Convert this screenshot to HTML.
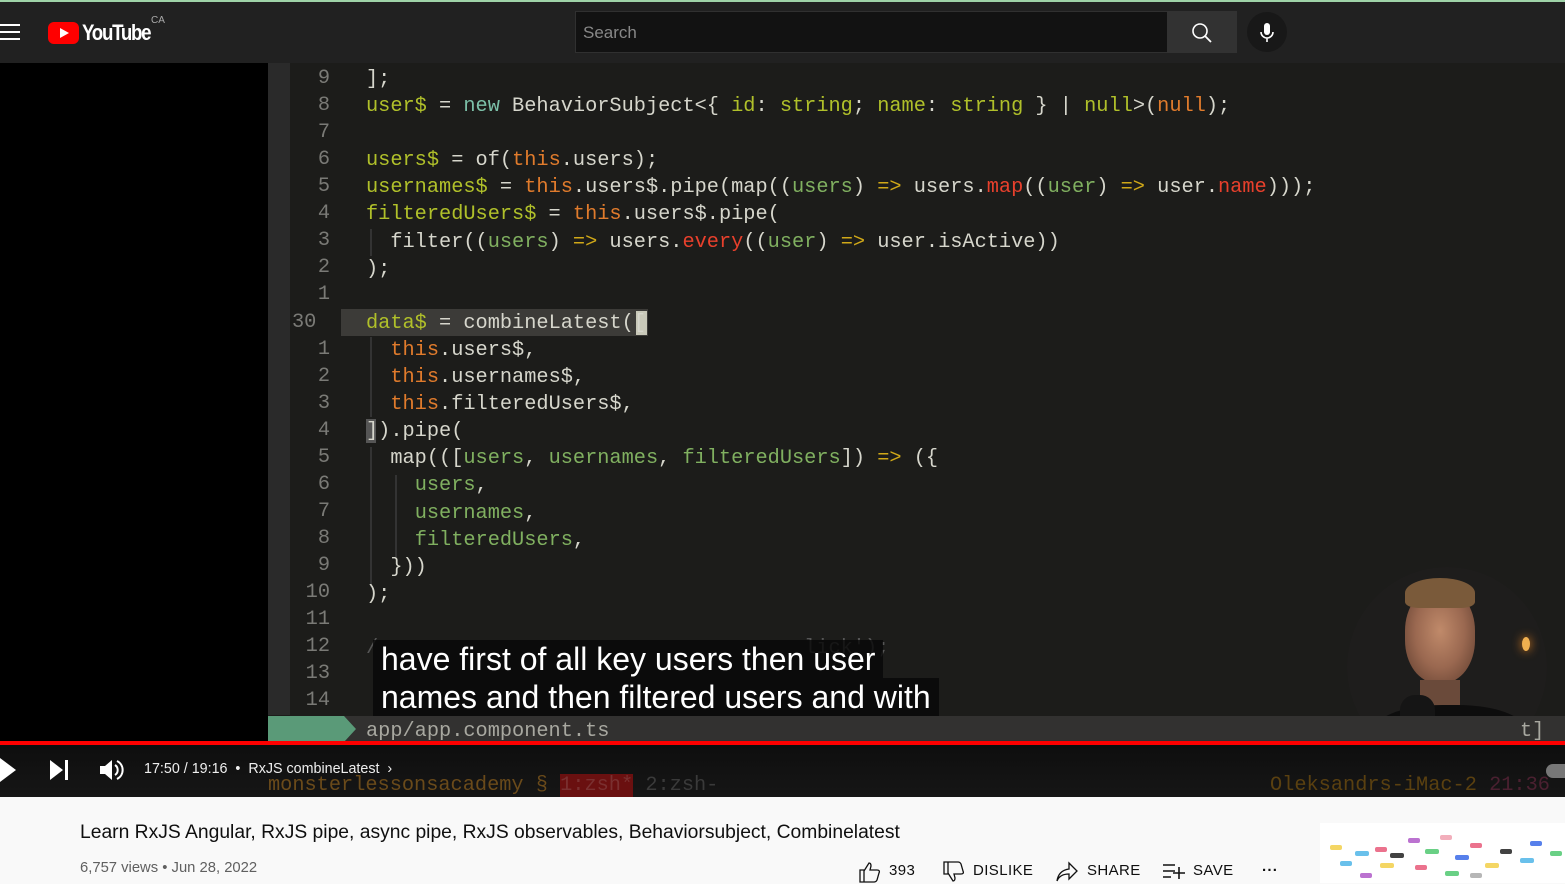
<!DOCTYPE html>
<html><head><meta charset="utf-8"><style>
*{margin:0;padding:0;box-sizing:border-box}
body{width:1565px;height:883px;overflow:hidden;background:#f9f9f9;font-family:"Liberation Sans",sans-serif;position:relative}
.hdr{position:absolute;left:0;top:0;width:1565px;height:63px;background:#212121;border-top:2px solid #9fd3a8}
.vid{position:absolute;left:0;top:63px;width:1565px;height:734px;background:#000}
.code{position:absolute;left:268px;top:63px;width:1297px;height:734px;background:#1c1c1a}
.gut{position:absolute;left:268px;top:63px;width:22px;height:652px;background:#2a2a2a}
.ln{position:absolute;left:290px;width:40px;text-align:right;color:#7a7a76;font:20.3px "Liberation Mono",monospace}
.cl{position:absolute;left:366px;white-space:pre;color:#d6d6cc;font:20.3px "Liberation Mono",monospace;line-height:27.1px}
.v{color:#b0c02a}.t{color:#e07b2c}.r{color:#e8402c}.p{color:#80b060}.a{color:#d0a818}.k{color:#7cc0a8}
.sub{position:absolute;left:373px;color:#fff;font-size:32px;background:rgba(8,8,8,.8);padding:0 8px;line-height:38px;height:38px}
.btn{position:absolute;top:862px;color:#0f0f0f;font-size:15px;letter-spacing:.4px}
</style></head><body>
<div class="hdr">
 <div style="position:absolute;left:0;top:22px;width:20px;height:2px;background:#fff;box-shadow:0 7px 0 #fff,0 14px 0 #fff"></div>
 <div style="position:absolute;left:48px;top:20px;width:31px;height:22px;background:#f00;border-radius:6px"></div>
 <div style="position:absolute;left:60px;top:26px;width:0;height:0;border-left:9px solid #fff;border-top:5px solid transparent;border-bottom:5px solid transparent"></div>
 <div style="position:absolute;left:82px;top:18px;color:#fff;font-size:22px;font-weight:bold;letter-spacing:-1.5px;transform:scaleX(.85);transform-origin:left">YouTube</div>
 <div style="position:absolute;left:151px;top:13px;color:#aaa;font-size:10px">CA</div>
 <div style="position:absolute;left:575px;top:9px;width:593px;height:42px;background:#121212;border:1px solid #303030"></div>
 <div style="position:absolute;left:583px;top:21px;color:#888;font-size:17px">Search</div>
 <div style="position:absolute;left:1167px;top:9px;width:70px;height:42px;background:#323232"></div>
 <svg style="position:absolute;left:1191px;top:20px" width="22" height="22" viewBox="0 0 22 22"><circle cx="9" cy="9" r="7" fill="none" stroke="#fff" stroke-width="1.6"/><path d="M14 14l6 6" stroke="#fff" stroke-width="1.8"/></svg>
 <div style="position:absolute;left:1247px;top:10px;width:40px;height:40px;border-radius:50%;background:#181818"></div>
 <svg style="position:absolute;left:1258px;top:20px" width="18" height="22" viewBox="0 0 18 22"><rect x="6" y="1" width="6" height="12" rx="3" fill="#fff"/><path d="M3 10a6 6 0 0 0 12 0M9 16v4" stroke="#fff" stroke-width="1.6" fill="none"/></svg>
</div>
<div class="vid"></div>
<div class="code"></div>
<div class="gut"></div>
<div style="position:absolute;left:341px;top:309px;width:307px;height:27px;background:#3c3b38"></div>
<div style="position:absolute;left:636px;top:311px;width:11px;height:24px;background:#c8c8b8"></div>
<div style="position:absolute;left:366px;top:419px;width:10px;height:24px;background:#555"></div>
<div style="position:absolute;left:370px;top:337px;width:2px;height:80px;background:#333"></div>
<div style="position:absolute;left:370px;top:229px;width:2px;height:27px;background:#333"></div>
<div style="position:absolute;left:370px;top:447px;width:2px;height:140px;background:#333"></div>
<div style="position:absolute;left:395px;top:475px;width:2px;height:82px;background:#333"></div>

<div class="ln" style="top:67px">9</div><div class="ln" style="top:94px">8</div><div class="ln" style="top:121px">7</div><div class="ln" style="top:148px">6</div><div class="ln" style="top:175px">5</div><div class="ln" style="top:202px">4</div><div class="ln" style="top:229px">3</div><div class="ln" style="top:256px">2</div><div class="ln" style="top:283px">1</div>
<div class="ln" style="top:311px;left:292px;text-align:left">30</div>
<div class="ln" style="top:338px">1</div><div class="ln" style="top:365px">2</div><div class="ln" style="top:392px">3</div><div class="ln" style="top:419px">4</div><div class="ln" style="top:446px">5</div><div class="ln" style="top:473px">6</div><div class="ln" style="top:500px">7</div><div class="ln" style="top:527px">8</div><div class="ln" style="top:554px">9</div><div class="ln" style="top:581px">10</div><div class="ln" style="top:608px">11</div><div class="ln" style="top:635px">12</div><div class="ln" style="top:662px">13</div><div class="ln" style="top:689px">14</div>

<div class="cl" style="top:66px">];
<span class="v">user$</span> = <span class="k">new</span> BehaviorSubject&lt;{ <span class="v">id</span>: <span class="v">string</span>; <span class="v">name</span>: <span class="v">string</span> } | <span class="v">null</span>&gt;(<span class="t">null</span>);

<span class="v">users$</span> = of(<span class="t">this</span>.users);
<span class="v">usernames$</span> = <span class="t">this</span>.users$.pipe(map((<span class="p">users</span>) <span class="a">=&gt;</span> users.<span class="r">map</span>((<span class="p">user</span>) <span class="a">=&gt;</span> user.<span class="r">name</span>)));
<span class="v">filteredUsers$</span> = <span class="t">this</span>.users$.pipe(
  filter((<span class="p">users</span>) <span class="a">=&gt;</span> users.<span class="r">every</span>((<span class="p">user</span>) <span class="a">=&gt;</span> user.isActive))
);

<span class="v">data$</span> = combineLatest([
  <span class="t">this</span>.users$,
  <span class="t">this</span>.usernames$,
  <span class="t">this</span>.filteredUsers$,
]).pipe(
  map(([<span class="p">users</span>, <span class="p">usernames</span>, <span class="p">filteredUsers</span>]) <span class="a">=&gt;</span> ({
    <span class="p">users</span>,
    <span class="p">usernames</span>,
    <span class="p">filteredUsers</span>,
  }))
);

<span style="color:#555">/                                   lick');</span></div>

<div style="position:absolute;left:1347px;top:567px;width:200px;height:200px;border-radius:50%;background:#1e1d1c"></div>
<div style="position:absolute;left:1405px;top:588px;width:70px;height:95px;border-radius:45%;background:radial-gradient(ellipse at 50% 45%,#c08a6a 0,#9a6850 50%,#5a3a2c 100%)"></div>
<div style="position:absolute;left:1405px;top:578px;width:70px;height:30px;border-radius:50% 50% 20% 20%;background:#7a5a3a"></div>
<div style="position:absolute;left:1420px;top:680px;width:40px;height:40px;background:#6a4a3a"></div>
<div style="position:absolute;left:1375px;top:705px;width:150px;height:55px;border-radius:45% 45% 30% 30%;background:#0d0d0d"></div>
<div style="position:absolute;left:1400px;top:695px;width:35px;height:60px;border-radius:15px;background:#151515"></div>
<div style="position:absolute;left:1522px;top:637px;width:8px;height:14px;border-radius:50%;background:#f0b050;box-shadow:0 0 10px #e08020"></div>

<div class="sub" style="top:640px">have first of all key users then user</div>
<div class="sub" style="top:678px">names and then filtered users and with</div>

<div style="position:absolute;left:268px;top:716px;width:1297px;height:27px;background:#323130"></div>
<div style="position:absolute;left:268px;top:716px;width:76px;height:27px;background:#5a9a78"></div>
<div style="position:absolute;left:344px;top:716px;width:0;height:0;border-left:12px solid #5a9a78;border-top:13.5px solid transparent;border-bottom:13.5px solid transparent"></div>
<div class="cl" style="top:718px;color:#a8a8a0">app/app.component.ts</div>
<div class="cl" style="top:718px;left:1520px;color:#a8a8a0">t]</div>

<div style="position:absolute;left:0;top:745px;width:1565px;height:52px;background:linear-gradient(#0e0e0e,#161616)"></div>
<div style="position:absolute;left:0;top:741px;width:1565px;height:4px;background:#f00"></div>
<div class="cl" style="top:772px;left:268px;color:#6a4a1a">monsterlessonsacademy § <span style="background:#6a1010;color:#7a3030">1:zsh*</span> <span style="color:#3a3a3a">2:zsh-</span></div>
<div class="cl" style="top:772px;left:1270px;color:#5a4010">Oleksandrs-iMac-2 <span style="color:#4a2030">21:36</span></div>
<svg style="position:absolute;left:0;top:758px" width="20" height="24"><path d="M0 0l16 12L0 24z" fill="#fff"/></svg>
<svg style="position:absolute;left:49px;top:759px" width="22" height="22"><path d="M1 1l13 10L1 21z" fill="#fff"/><rect x="16" y="1" width="3" height="20" fill="#fff"/></svg>
<svg style="position:absolute;left:99px;top:758px" width="26" height="24"><path d="M1 8h5l7-6v20l-7-6H1z" fill="#fff"/><path d="M16 7a6 6 0 0 1 0 10M18 3a10 10 0 0 1 0 18" stroke="#fff" stroke-width="2" fill="none"/></svg>
<div style="position:absolute;left:144px;top:761px;color:#eee;font-size:14.3px">17:50 / 19:16 &nbsp;• &nbsp;RxJS combineLatest &nbsp;›</div>
<div style="position:absolute;left:1546px;top:764px;width:30px;height:14px;border-radius:7px;background:#777"></div>

<div style="position:absolute;left:80px;top:822px;color:#0f0f0f;font-size:19.3px">Learn RxJS Angular, RxJS pipe, async pipe, RxJS observables, Behaviorsubject, Combinelatest</div>
<div style="position:absolute;left:80px;top:860px;color:#606060;font-size:14.8px">6,757 views • Jun 28, 2022</div>

<svg style="position:absolute;left:858px;top:860px" width="24" height="24"><path d="M2 10h4v12H2zM6 11l5-8c2 0 2 2 2 3l-1 4h7c2 0 3 1 2 3l-2 7c-1 2-2 2-3 2H6" fill="none" stroke="#111" stroke-width="1.3"/></svg>
<div class="btn" style="left:889px">393</div>
<svg style="position:absolute;left:942px;top:860px" width="24" height="24"><path d="M2 2h4v12H2zM6 13l5 8c2 0 2-2 2-3l-1-4h7c2 0 3-1 2-3l-2-7c-1-2-2-2-3-2H6" fill="none" stroke="#111" stroke-width="1.3"/></svg>
<div class="btn" style="left:973px">DISLIKE</div>
<svg style="position:absolute;left:1055px;top:860px" width="24" height="24"><path d="M14 3l8 8-8 8v-5c-6 0-10 2-12 7 1-7 5-11 12-12z" fill="none" stroke="#111" stroke-width="1.3"/></svg>
<div class="btn" style="left:1087px">SHARE</div>
<svg style="position:absolute;left:1162px;top:862px" width="24" height="20"><path d="M1 3h12M1 9h12M1 15h8M17 5v12M11 11h12" stroke="#111" stroke-width="1.6"/></svg>
<div class="btn" style="left:1193px">SAVE</div>
<div class="btn" style="left:1262px;font-weight:bold">···</div>

<div style="position:absolute;left:1320px;top:823px;width:245px;height:60px;background:#fff"></div>
<svg style="position:absolute;left:1320px;top:823px" width="245" height="60">
<g opacity=".85">
<rect x="10" y="22" width="12" height="5" rx="2" fill="#f3d04a"/><rect x="35" y="28" width="14" height="5" rx="2" fill="#4fb6e8"/><rect x="55" y="24" width="12" height="5" rx="2" fill="#e85a7a"/><rect x="70" y="30" width="14" height="5" rx="2" fill="#222"/><rect x="88" y="15" width="12" height="5" rx="2" fill="#b05ac8"/><rect x="105" y="26" width="14" height="5" rx="2" fill="#4fc870"/><rect x="120" y="12" width="12" height="5" rx="2" fill="#f0a0b0"/><rect x="135" y="32" width="14" height="5" rx="2" fill="#3a6ae8"/><rect x="150" y="20" width="12" height="5" rx="2" fill="#e85a7a"/><rect x="165" y="40" width="14" height="5" rx="2" fill="#f3d04a"/><rect x="180" y="26" width="12" height="5" rx="2" fill="#222"/><rect x="200" y="35" width="14" height="5" rx="2" fill="#4fb6e8"/><rect x="60" y="40" width="14" height="5" rx="2" fill="#f3d04a"/><rect x="95" y="42" width="12" height="5" rx="2" fill="#e85a7a"/><rect x="125" y="48" width="14" height="5" rx="2" fill="#4fc870"/><rect x="40" y="50" width="12" height="5" rx="2" fill="#b05ac8"/><rect x="150" y="50" width="12" height="5" rx="2" fill="#aaa"/><rect x="210" y="18" width="12" height="5" rx="2" fill="#3a6ae8"/><rect x="230" y="28" width="12" height="5" rx="2" fill="#4fc870"/><rect x="20" y="38" width="12" height="5" rx="2" fill="#4fb6e8"/>
</g></svg>
</body></html>
